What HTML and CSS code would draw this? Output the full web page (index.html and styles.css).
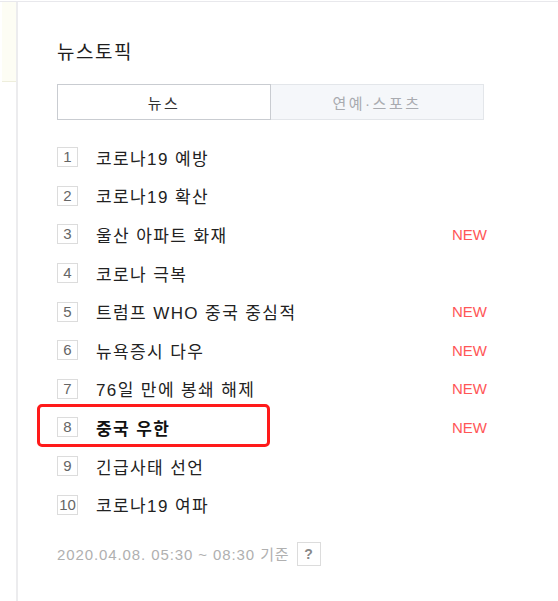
FILE: index.html
```
<!DOCTYPE html>
<html lang="ko">
<head>
    <meta charset="UTF-8">
    <meta name="viewport" content="width=device-width, initial-scale=1.0">
    <title>뉴스토픽</title>
    <link rel="stylesheet" href="styles.css">
</head>
<body>
    <div class="page">
        <div class="side">
            <div class="side-top"></div>
        </div>

        <div class="main">
            <h2 class="title">뉴스토픽</h2>

            <div class="tabs">
                <div class="tab active">뉴스</div>
                <div class="tab">연예·스포츠</div>
            </div>

            <ol class="topics">
                <li><span class="num">1</span><span class="text">코로나19 예방</span></li>
                <li><span class="num">2</span><span class="text">코로나19 확산</span></li>
                <li><span class="num">3</span><span class="text">울산 아파트 화재</span><span class="new">NEW</span></li>
                <li><span class="num">4</span><span class="text">코로나 극복</span></li>
                <li><span class="num">5</span><span class="text">트럼프 WHO 중국 중심적</span><span class="new">NEW</span></li>
                <li><span class="num">6</span><span class="text">뉴욕증시 다우</span><span class="new">NEW</span></li>
                <li><span class="num">7</span><span class="text">76일 만에 봉쇄 해제</span><span class="new">NEW</span></li>
                <li class="marked"><span class="num">8</span><span class="text">중국 우한</span><span class="new">NEW</span></li>
                <li><span class="num">9</span><span class="text">긴급사태 선언</span></li>
                <li><span class="num">10</span><span class="text">코로나19 여파</span></li>
            </ol>

            <div class="updated">
                <span class="time">2020.04.08. 05:30 ~ 08:30 기준</span>
                <span class="help">?</span>
            </div>
        </div>
    </div>
</body>
</html>
```

FILE: styles.css
```
body {
    margin: 0;
    padding: 0;
    background: #ffffff;
    font-family: "Liberation Sans", "Noto Sans CJK KR", sans-serif;
    color: #222222;
}
.page {
    display: flex;
    min-height: 599px;
    margin-top: 1px;
    border-top: 1px solid #e8e8ec;
}
.side {
    width: 16px;
    border-right: 2px solid #ececee;
}
.side-top {
    height: 79px;
    margin-left: 2px;
    background: #fdfdf4;
    border-bottom: 1px solid #eeeedc;
}
.main {
    flex: 1;
    padding-left: 39px;
}
.title {
    margin: 40px 0 20px;
    font-size: 19px;
    font-weight: normal;
    line-height: 22px;
    letter-spacing: 1.5px;
    color: #1e1e1e;
}
.tabs {
    display: flex;
    width: 427px;
    height: 36px;
}
.tab {
    flex: 1;
    display: flex;
    align-items: center;
    justify-content: center;
    font-size: 15px;
    letter-spacing: 2.5px;
    color: #a9abb0;
    background: #f5f7fa;
    border: 1px solid #e3e6ea;
    border-left: none;
}
.tab.active {
    color: #333333;
    background: #ffffff;
    border: 1px solid #c9ccd1;
}
.topics {
    list-style: none;
    margin: 18px 0 0;
    padding: 0;
    width: 430px;
}
.topics li {
    position: relative;
    display: flex;
    align-items: center;
    height: 38.6px;
}
.num {
    box-sizing: border-box;
    width: 21px;
    height: 20px;
    border: 1px solid #dcdcdc;
    font-size: 15px;
    line-height: 18px;
    text-align: center;
    color: #666666;
    margin-right: 18px;
}
.text {
    flex: 1;
    font-size: 17px;
    letter-spacing: 1.4px;
    color: #222222;
}
.new {
    font-size: 15px;
    color: #ff5757;
}
.marked .text {
    font-weight: bold;
    color: #111111;
}
/* annotation box drawn over the 8th row */
.marked::after {
    content: "";
    position: absolute;
    box-sizing: border-box;
    left: -20px;
    top: -4px;
    width: 233px;
    height: 43px;
    border: 3px solid #ff1a1a;
    border-radius: 5px;
}
.updated {
    display: flex;
    align-items: center;
    gap: 7px;
    margin-top: 18px;
    font-size: 15px;
    color: #b0b0b0;
}
.time {
    letter-spacing: 0.9px;
}
.help {
    box-sizing: border-box;
    width: 24px;
    height: 24px;
    border: 1px solid #dcdcdc;
    font-size: 14px;
    font-weight: bold;
    line-height: 22px;
    text-align: center;
    color: #888888;
}
```
